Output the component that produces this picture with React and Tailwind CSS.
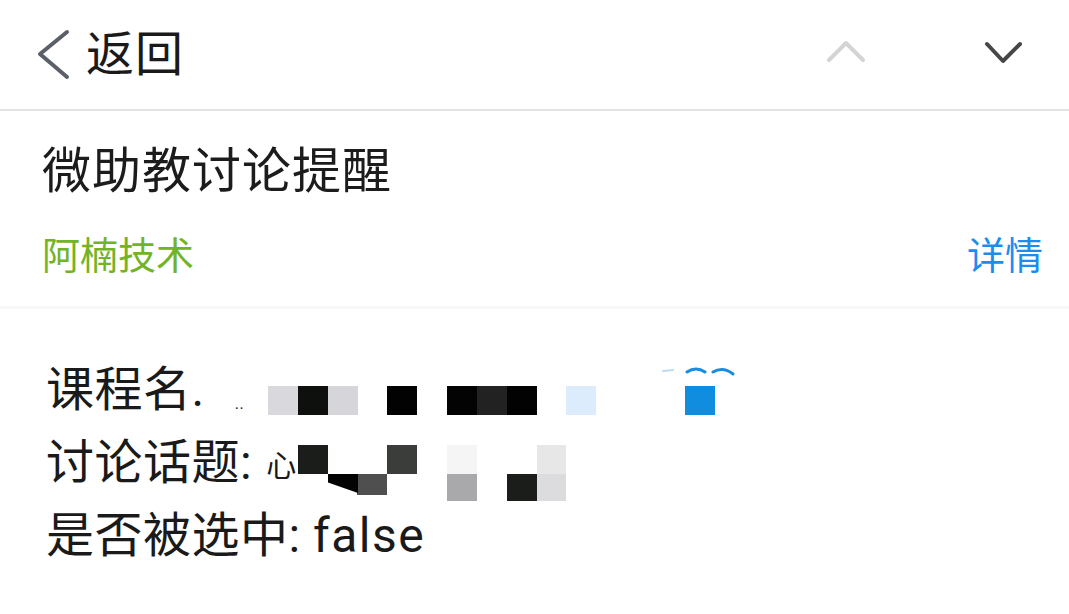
import React from "react";

const font = { fontFamily: 'Roboto, "Noto Sans CJK SC", "Noto Sans", sans-serif' };

// mosaic squares that cover the private bits of the message
const mosaic = [
  // row 1
  { x: 268, y: 77, w: 30, h: 29, c: "bg-[#d9d8dc]" },
  { x: 298, y: 77, w: 30, h: 29, c: "bg-[#0d100d]" },
  { x: 328, y: 77, w: 30, h: 29, c: "bg-[#d6d5d9]" },
  { x: 387, y: 77, w: 30, h: 29, c: "bg-[#020202]" },
  { x: 447, y: 77, w: 30, h: 29, c: "bg-[#030303]" },
  { x: 477, y: 77, w: 30, h: 29, c: "bg-[#222222]" },
  { x: 507, y: 77, w: 30, h: 29, c: "bg-[#020202]" },
  { x: 566, y: 77, w: 30, h: 29, c: "bg-[#dcecfd]" },
  { x: 685, y: 77, w: 30, h: 29, c: "bg-[#118ddf]" },
  // row 2 top
  { x: 298, y: 136, w: 30, h: 29, c: "bg-[#1b1d1a]" },
  { x: 387, y: 136, w: 30, h: 29, c: "bg-[#3b3d3a]" },
  { x: 447, y: 136, w: 30, h: 29, c: "bg-[#f5f5f5]" },
  { x: 537, y: 136, w: 29, h: 29, c: "bg-[#e7e7e7]" },
  // row 2 bottom
  { x: 357, y: 165, w: 30, h: 21, c: "bg-[#4f4f4f]" },
  { x: 447, y: 165, w: 30, h: 27, c: "bg-[#a9a8aa]" },
  { x: 507, y: 165, w: 30, h: 27, c: "bg-[#1b1d1a]" },
  { x: 537, y: 165, w: 29, h: 27, c: "bg-[#dcdbde]" },
];

function Chevron({ points, color, w, h }) {
  return (
    <svg width={w} height={h} viewBox={`0 0 ${w} ${h}`} fill="none">
      <polyline points={points} stroke={color} strokeWidth="4" strokeLinecap="round" strokeLinejoin="round" />
    </svg>
  );
}

export default function App() {
  return (
    <div className="w-[1069px] h-[614px] bg-white overflow-hidden text-[#1a1a1a]" style={font}>
      {/* top bar */}
      <div className="h-[109px] flex items-center pl-[36px] pr-[45px]">
        <Chevron w={34} h={52} points="31,3 4,25 31,48" color="#5b6068" />
        <span className="ml-[16px] text-[48px] leading-none tracking-[1px]">返回</span>
        <div className="ml-auto flex items-center gap-[118px]">
          <div className="mt-[-8px]">
            <Chevron w={40} h={24} points="3,21 20,4 37,21" color="#d4d4d4" />
          </div>
          <div className="mt-[-4px]">
            <Chevron w={40} h={24} points="3,3 19,20 36,3" color="#474747" />
          </div>
        </div>
      </div>
      <div className="h-[2px] bg-[#e2e2e2]" />

      {/* message head */}
      <div className="pl-[42px] pr-[26px] pt-[36px] h-[195px]">
        <div className="text-[49px] leading-[49px] tracking-[1px] text-[#1c1c1c]">微助教讨论提醒</div>
        <div className="mt-[41px] flex items-center justify-between text-[38px] leading-[38px]">
          <span className="text-[#73b327]">阿楠技术</span>
          <span className="text-[#1b8df0]">详情</span>
        </div>
      </div>
      <div className="h-[3px] bg-[#f7f7f7]" />

      {/* message body */}
      <div className="relative pl-[46px] pt-[44px] text-[48px] leading-[73px] tracking-[0.5px] text-[#1a1a1a]">
        <div className="flex items-center">
          <span>课程名.</span>
          <span className="ml-[30px] text-[16px] leading-none mt-[28px]">..</span>
        </div>
        <div className="flex items-center">
          <span>讨论话题:</span>
          <span className="ml-[14px] text-[30px] leading-none mt-[6px]">心</span>
        </div>
        <div>
          是否被选中: <span className="tracking-[1.5px]">false</span>
        </div>

        {mosaic.map((m, i) => (
          <div
            key={i}
            className={`absolute ${m.c}`}
            style={{ left: m.x, top: m.y, width: m.w, height: m.h }}
          />
        ))}
        <div
          className="absolute bg-[#030303] [clip-path:polygon(0_0,100%_0,100%_100%,0_45%)]"
          style={{ left: 328, top: 165, width: 30, height: 19 }}
        />
        <svg className="absolute left-[655px] top-[56px]" width="82" height="14" viewBox="0 0 82 14" fill="none">
          <path d="M8 6 L18 5" stroke="#bcdcf4" strokeWidth="2" strokeLinecap="round" />
          <path d="M32 7 Q41 1 50 7" stroke="#1a8ce0" strokeWidth="3" strokeLinecap="round" />
          <path d="M58 7 Q68 1 78 9" stroke="#1a8ce0" strokeWidth="3" strokeLinecap="round" />
        </svg>
      </div>
    </div>
  );
}
